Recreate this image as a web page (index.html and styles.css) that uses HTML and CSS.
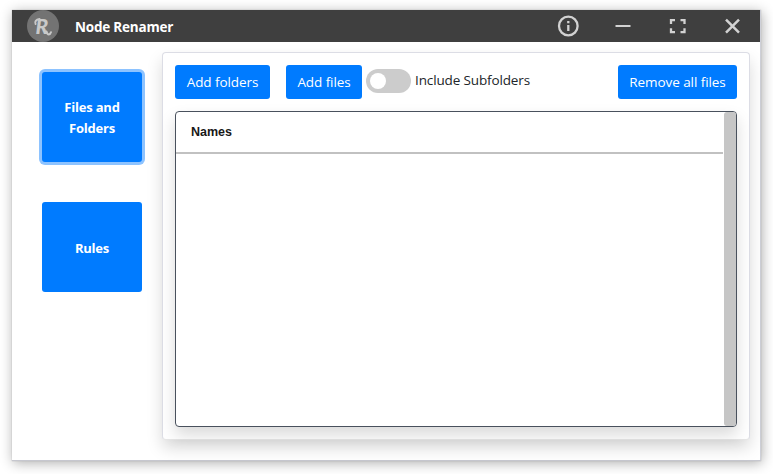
FILE: index.html
```html
<!DOCTYPE html>
<html lang="en">
<head>
<meta charset="utf-8">
<title>Node Renamer</title>
<link rel="stylesheet" href="styles.css">
</head>
<body>
<div class="window">
  <header class="titlebar">
    <svg class="logo" viewBox="0 0 32 32" aria-hidden="true">
      <circle cx="16" cy="16" r="16" fill="#737373"/>
      <text class="logo-letter" x="8.500" y="24">R</text>
      <path d="M12.500 9C9 9.500 7.400 12 8.600 14M19.500 21.500C20.500 25.500 23 25 24 22.200" fill="none" stroke="#c9c9c9" stroke-width="2" stroke-linecap="round"/>
    </svg>
    <h1 class="title">Node Renamer</h1>
    <nav class="controls">
      <svg viewBox="0 0 24 24" fill="none" stroke="#d2d2d2" stroke-width="2.300"><circle cx="12.300" cy="12" r="9.300"/><path d="M12.300 11v6M12.300 7v2.200"/></svg>
      <svg viewBox="0 0 24 24" fill="none" stroke="#d2d2d2" stroke-width="2"><path d="M4.500 12h15"/></svg>
      <svg viewBox="0 0 24 24" fill="none" stroke="#d2d2d2" stroke-width="2.300"><path d="M6 10V6.200h4M15.500 6.200h4V10M19.500 14.200v4h-4M10 18.200h-4v-4"/></svg>
      <svg viewBox="0 0 24 24" fill="none" stroke="#d2d2d2" stroke-width="2.500"><path d="M6 5.700l13 13M19 5.700l-13 13"/></svg>
    </nav>
  </header>
  <div class="body">
    <aside class="sidebar">
      <button class="btn tab active"><span>Files and</span><span>Folders</span></button>
      <button class="btn tab"><span>Rules</span></button>
    </aside>
    <main class="panel">
      <div class="toolbar">
        <button class="btn add-folders">Add folders</button>
        <button class="btn add-files">Add files</button>
        <span class="switch"></span>
        <span class="label">Include Subfolders</span>
        <button class="btn remove">Remove all files</button>
      </div>
      <section class="list">
        <div class="rows"><div class="head">Names</div></div>
        <div class="scrollbar"></div>
      </section>
    </main>
  </div>
</div>
</body>
</html>
```
FILE: styles.css
```css
* { box-sizing: border-box; }
body {
  margin: 0;
  height: 474px;
  padding: 10px 12px;
  overflow: hidden;
  background: #fff;
  font-family: "Open Sans", "Noto Sans", sans-serif;
  font-size: 13.5px;
  color: #212529;
}
.window {
  width: 749px;
  height: 451px;
  display: flex;
  flex-direction: column;
  background: #fff;
  border-right: 1px solid #ced0d8;
  border-bottom: 1px solid #c6c7cf;
  box-shadow: 0 0 1px #aaa, 1px 2px 12px rgba(0, 0, 0, .32);
}
.titlebar {
  height: 32px;
  flex: none;
  display: flex;
  align-items: center;
  padding: 0 16px 0 15px;
  background: #3f3f3f;
}
.logo { width: 32px; height: 32px; }
.logo-letter { font: italic 900 21px Lato, sans-serif; fill: #c9c9c9; }
.title {
  margin: 2px 0 0 16px;
  font-size: 13.5px;
  font-weight: 700;
  line-height: 32px;
  color: #fff;
  letter-spacing: -.2px;
  white-space: nowrap;
}
.controls { display: flex; gap: 30.7px; margin-left: auto; }
.controls svg { width: 24px; height: 24px; }
.body { flex: 1; display: flex; align-items: flex-start; }
.sidebar {
  width: 150px;
  padding: 30px 0 0 30px;
  display: flex;
  flex-direction: column;
  gap: 40px;
}
.btn {
  padding: 0;
  border: 0;
  border-radius: 3px;
  background: #007bff;
  color: #fff;
  font: inherit;
  letter-spacing: -.08px;
  height: 34px;
  line-height: 34px;
  white-space: nowrap;
}
.tab {
  width: 100px;
  height: 90px;
  padding-top: 2px;
  display: flex;
  flex-direction: column;
  align-items: center;
  justify-content: center;
  font-weight: 700;
  font-size: 13px;
  letter-spacing: -.2px;
  line-height: 21px;
}
.active { box-shadow: 0 0 0 3px #8dc3ff; }
.panel {
  width: 588px;
  height: 388px;
  margin-top: 10px;
  padding: 12px;
  border: 1px solid #dcdde5;
  border-bottom-color: #e6e6e6;
  border-radius: 4px;
  background: #fff;
  box-shadow: 0 8px 16px rgba(0, 0, 0, .15);
}
.toolbar { display: flex; align-items: center; height: 34px; }
.add-folders { width: 95px; margin-right: 16px; }
.add-files { width: 76px; margin-right: 4px; }
.switch {
  width: 45px;
  height: 24px;
  margin: 0 4px 2px 0;
  padding: 4px;
  border-radius: 12px;
  background: #ccc;
}
.switch::before {
  content: "";
  display: block;
  width: 16px;
  height: 16px;
  border-radius: 50%;
  background: #fff;
}
.label { line-height: 30px; padding-bottom: 4px; letter-spacing: -.13px; white-space: nowrap; }
.remove { width: 119px; margin-left: auto; }
.list {
  height: 316px;
  margin-top: 12px;
  display: flex;
  border: 1px solid #49515d;
  border-radius: 4px;
  background: #fff;
  box-shadow: 0 8px 16px rgba(0, 0, 0, .15);
}
.rows { flex: 1; }
.head {
  height: 42px;
  margin-right: 1px;
  padding-left: 15px;
  border-bottom: 2px solid #c1c1c1;
  font: 700 12.5px/40px "Liberation Sans", sans-serif;
  color: #181818;
}
.scrollbar { width: 12px; border-radius: 3px; background: #c6c6c6; }
```
